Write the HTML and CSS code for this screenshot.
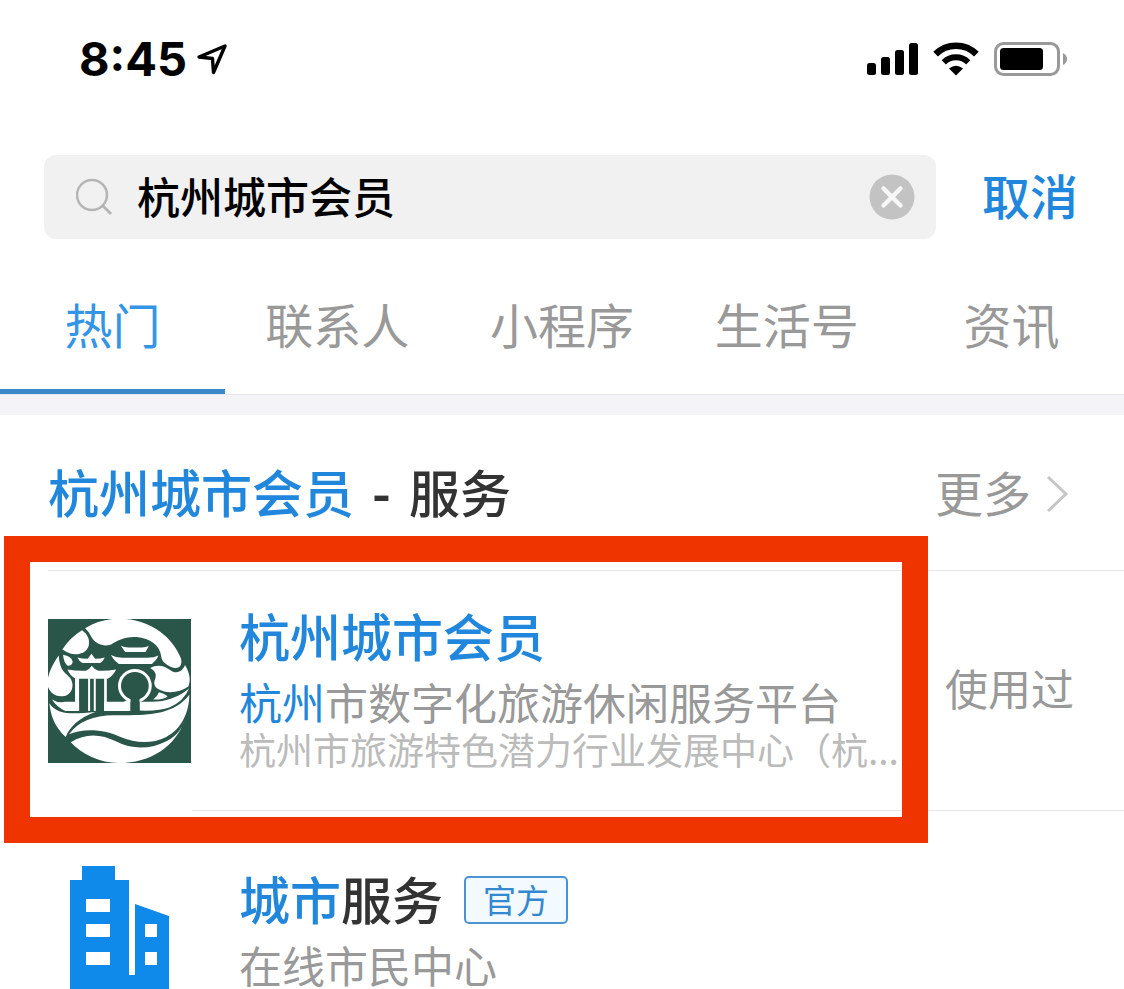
FILE: index.html
```html
<!DOCTYPE html>
<html lang="zh-CN">
<head>
<meta charset="utf-8">
<meta name="viewport" content="width=device-width, initial-scale=1">
<title>杭州城市会员</title>
<link rel="stylesheet" href="styles.css">
</head>
<body>
<header class="status">
  <div class="status-left">
    <span class="time">8:45</span>
    <svg class="arrow" width="32" height="32" viewBox="0 0 32 32" aria-hidden="true"><path d="M3 14 29 3 17.500 29.500 16.500 15.500Z" fill="none" stroke="#000" stroke-width="3.400" stroke-linejoin="round"/></svg>
  </div>
  <div class="status-right">
    <svg width="52" height="34" viewBox="0 0 52 34" aria-hidden="true"><rect x="1" y="21" width="9" height="12" rx="2.500"/><rect x="15" y="15" width="9" height="18" rx="2.500"/><rect x="29" y="8" width="9" height="25" rx="2.500"/><rect x="43" y="1" width="9" height="32" rx="2.500"/></svg>
    <svg width="46" height="34" viewBox="0 0 46 34" aria-hidden="true"><path d="M2.600 12.200A29 29 0 0 1 43.400 12.200" fill="none" stroke="#000" stroke-width="6.600"/><path d="M10.800 20.300A17.300 17.300 0 0 1 35.200 20.300" fill="none" stroke="#000" stroke-width="6"/><path d="M16 26.600Q23 20.800 30 26.600L23 33.500Z"/></svg>
    <svg width="74" height="34" viewBox="0 0 74 34" aria-hidden="true"><rect x="1.500" y="1.500" width="63" height="31" rx="8" fill="none" stroke="#999" stroke-width="3"/><rect x="6" y="6" width="43" height="22" rx="3.500"/><path d="M69 11Q73 13 73 17T69 23Z" fill="#999"/></svg>
  </div>
</header>

<form class="search">
  <div class="search-box">
    <svg width="38" height="38" viewBox="0 0 38 38" aria-hidden="true"><circle cx="16" cy="17" r="15" fill="none" stroke="#b5b5b5" stroke-width="2.500"/><path d="m27 28 8 8" stroke="#b5b5b5" stroke-width="3"/></svg>
    <input class="search-input" type="text" aria-label="搜索" value="杭州城市会员">
    <button class="clear" type="button" aria-label="清除"><svg width="46" height="46" viewBox="0 0 46 46" aria-hidden="true"><circle cx="23" cy="23" r="22.500" fill="#c3c3c3"/><path d="m14.500 14.500 17 17m0-17-17 17" stroke="#f7f7f7" stroke-width="4.500" stroke-linecap="round"/></svg></button>
  </div>
  <button class="cancel" type="button">取消</button>
</form>

<nav class="tabs">
  <a class="tab tab-active" href="#hot" aria-current="page">热门</a>
  <a class="tab" href="#contacts">联系人</a>
  <a class="tab" href="#mini">小程序</a>
  <a class="tab" href="#life">生活号</a>
  <a class="tab" href="#news">资讯</a>
</nav>

<main class="results">
  <div class="section-head">
    <h1 class="heading"><span class="hit">杭州城市会员</span><span class="dash">-</span>服务</h1>
    <a class="more" href="#more">更多<svg class="chevron" width="24" height="38" viewBox="0 0 24 38" aria-hidden="true"><path d="m2 2 18 17L2 36" fill="none" stroke="#c6c6c6" stroke-width="3"/></svg></a>
  </div>

  <article class="row">
    <svg class="row-icon" width="143" height="144" viewBox="39 39 428 431" aria-hidden="true">
      <path fill="#2a5549" d="M39 39h428v431H39z"/>
      <g fill="#fff">
        <path d="M150 67C180 48 215 38 250 38C340 38 410 88 437 157C442 178 432 190 412 184C390 176 380 166 378 152C375 118 344 96 304 93C266 91 248 104 228 115C200 124 178 112 166 88Q160 76 150 67Z"/>
        <path d="M141 73C156 84 165 100 161 118C155 140 130 148 108 143Q94 138 82 130Q106 94 141 73Z"/>
        <path d="M84 146Q108 150 113 166Q111 180 98 179Q86 170 84 146Z"/>
        <path d="M71 148C42 190 35 220 38 240C46 262 64 272 82 270C104 268 114 252 112 233C110 212 94 208 84 194Q73 178 71 148Z"/>
        <path d="M257 119Q267 124 280 124H320Q334 124 341 119L331 138H270Z"/>
        <path d="M227 147Q242 155 260 155H336Q356 155 370 148Q363 164 350 174H251Q236 164 227 147Z"/>
        <path d="M127 154Q140 158 158 158L169 143 180 158Q196 158 209 154Q204 166 195 171H142Q132 165 127 154Z"/>
        <path d="M97 190Q122 195 152 194Q165 188 170 179Q176 189 190 194Q219 195 243 190Q235 207 218 218H122Q104 208 97 190Z"/>
        <path d="M120 216h12v98h-12zM159 216h6v98h-6zM176 216h6v98h-6zM207 216h8v98h-8z"/>
        <path d="M51 280Q68 291 90 287H132V314H91Q66 304 51 280Z"/>
        <path d="M207 287H266L286 277V314H207Z"/>
        <path d="M313 287H350Q415 286 461 247Q446 285 402 304Q373 315 313 313Z"/>
        <path d="M345 186C365 174 386 178 402 190C424 207 442 196 449 177C467 207 465 228 459 241C430 262 390 263 366 247Q352 236 359 221C365 207 361 195 345 186Z"/>
        <path d="M354 280Q367 270 371 258Q386 261 397 270Q389 280 354 280Z"/>
        <path d="M43 291C65 325 108 325 181 317C133 333 103 362 92 392C61 364 47 330 43 291Z"/>
        <path d="M102 384C130 344 176 328 235 327C323 327 412 332 462 266C462 319 437 370 393 392C352 413 302 412 258 393C211 371 150 364 102 384Z"/>
        <path d="M107 408C151 379 199 383 242 405C291 431 347 429 395 404C428 386 441 363 448 341C421 420 347 470 250 470C194 470 140 444 107 408Z"/>
      </g>
      <circle cx="299" cy="239" r="46" fill="#2a5549" stroke="#fff" stroke-width="9"/>
      <path d="M286 314V275Q268 263 268 239A31 31 0 0 1 330 239Q330 263 313 275V314Z" fill="#2a5549"/>
    </svg>
    <div class="row-text">
      <h2 class="title"><span class="hit">杭州城市会员</span></h2>
      <p class="desc"><span class="hit">杭州</span>市数字化旅游休闲服务平台</p>
      <p class="owner">杭州市旅游特色潜力行业发展中心（杭...</p>
    </div>
    <span class="used">使用过</span>
    <div class="frame"></div>
  </article>

  <article class="row">
    <svg class="row-icon" width="143" height="144" viewBox="0 0 143 144" aria-hidden="true">
      <path fill="#0f8aea" d="M22 21H34V7H67V21H81V116H87V45L121 57V144H22Z"/>
      <path fill="#fff" d="M38 40h24v13H38zM38 65h24v13H38zM38 93h24v13H38zM97 65h12v13H97zM97 93h12v13H97z"/>
    </svg>
    <div class="row-text">
      <h2 class="title"><span class="hit">城市</span>服务<span class="badge">官方</span></h2>
      <p class="desc">在线市民中心</p>
    </div>
  </article>
</main>
</body>
</html>
```
FILE: styles.css
```css
* { box-sizing: border-box; }

body {
  margin: 0;
  height: 100vh;
  overflow: hidden;
  background: #fff;
  color: #333;
  font-family: "Noto Sans CJK SC", sans-serif;
}

h1, h2, p { margin: 0; font-weight: 500; white-space: nowrap; }
a { text-decoration: none; color: inherit; }
svg { display: block; flex: none; }
button, input { border: 0; padding: 0; background: none; font: inherit; }

.status {
  display: flex;
  justify-content: space-between;
  align-items: center;
  height: 118px;
  padding: 0 56px 0 79px;
}

.status-left { display: flex; align-items: center; gap: 9px; }
.time {
  color: #000;
  font: 700 47px/56px Inter, sans-serif;
}
.status-right { display: flex; align-items: center; gap: 15px; }

.search {
  display: flex;
  align-items: center;
  padding: 37px 46px 0 44px;
  gap: 46px;
}
.search-box {
  display: flex;
  flex: 1;
  align-items: center;
  min-width: 0;
  height: 84px;
  padding: 0 21px 0 32px;
  border-radius: 12px;
  background: #f1f1f1;
}
.search-input {
  flex: 1;
  min-width: 0;
  height: 68px;
  margin-left: 23px;
  padding-bottom: 4px;
  color: #000;
  font-size: 43px;
  font-weight: 500;
  outline: 0;
}
.clear { flex: none; }
.cancel {
  padding-bottom: 6px;
  color: #2187dc;
  font-size: 48px;
  font-weight: 500;
  line-height: 64px;
}

.tabs {
  display: flex;
  height: 156px;
  border-bottom: 1px solid #e6e6ec;
}
.tab {
  flex: 1;
  padding-top: 52px;
  color: #999;
  font-size: 48px;
  font-weight: 400;
  line-height: 64px;
  text-align: center;
}
.tab-active {
  border-bottom: 5px solid #3a87c8;
  color: #3495e6;
}

.results { border-top: 20px solid #f3f3f8; }

.section-head {
  display: flex;
  justify-content: space-between;
  align-items: center;
  height: 156px;
  padding: 0 54px 4px 48px;
}
.heading { font-size: 51px; line-height: 68px; }
.dash { margin: 0 18px; font-weight: 700; }
.hit { color: #2187dc; }
.more {
  display: flex;
  align-items: center;
  gap: 15px;
  color: #999;
  font-size: 48px;
  line-height: 64px;
}
.chevron { margin-top: 6px; }

.row {
  position: relative;
  display: flex;
  align-items: center;
  height: 240px;
  padding: 0 50px 0 48px;
}
.row::before {
  content: "";
  position: absolute;
  top: -1px;
  left: 48px;
  right: 0;
  border-top: 1px solid #e8e8e8;
}
.row + .row::before { left: 192px; }
.row-text {
  flex: 1;
  min-width: 0;
  margin-left: 48px;
  padding-bottom: 2px;
}
.title {
  display: flex;
  align-items: center;
  font-size: 51px;
  line-height: 68px;
}
.desc {
  color: #999;
  font-size: 43px;
  font-weight: 400;
  line-height: 64px;
}
.owner {
  margin-bottom: 14px;
  color: #bbb;
  font-size: 37px;
  font-weight: 400;
  line-height: 32px;
}
.used {
  padding-bottom: 8px;
  color: #999;
  font-size: 43px;
  line-height: 64px;
}
.badge {
  margin: 4px 0 0 21px;
  padding: 0 17px 2px;
  border: 2px solid #4a94d4;
  border-radius: 5px;
  background: #f2f9ff;
  color: #3388d0;
  font-size: 33px;
  font-weight: 400;
  line-height: 42px;
}

/* Callout around the first result, spilling past the row edges. */
.frame {
  position: absolute;
  z-index: 1;
  top: -35px;
  right: 196px;
  bottom: -32px;
  left: 4px;
  border: 26px solid #f03400;
  pointer-events: none;
}
```
